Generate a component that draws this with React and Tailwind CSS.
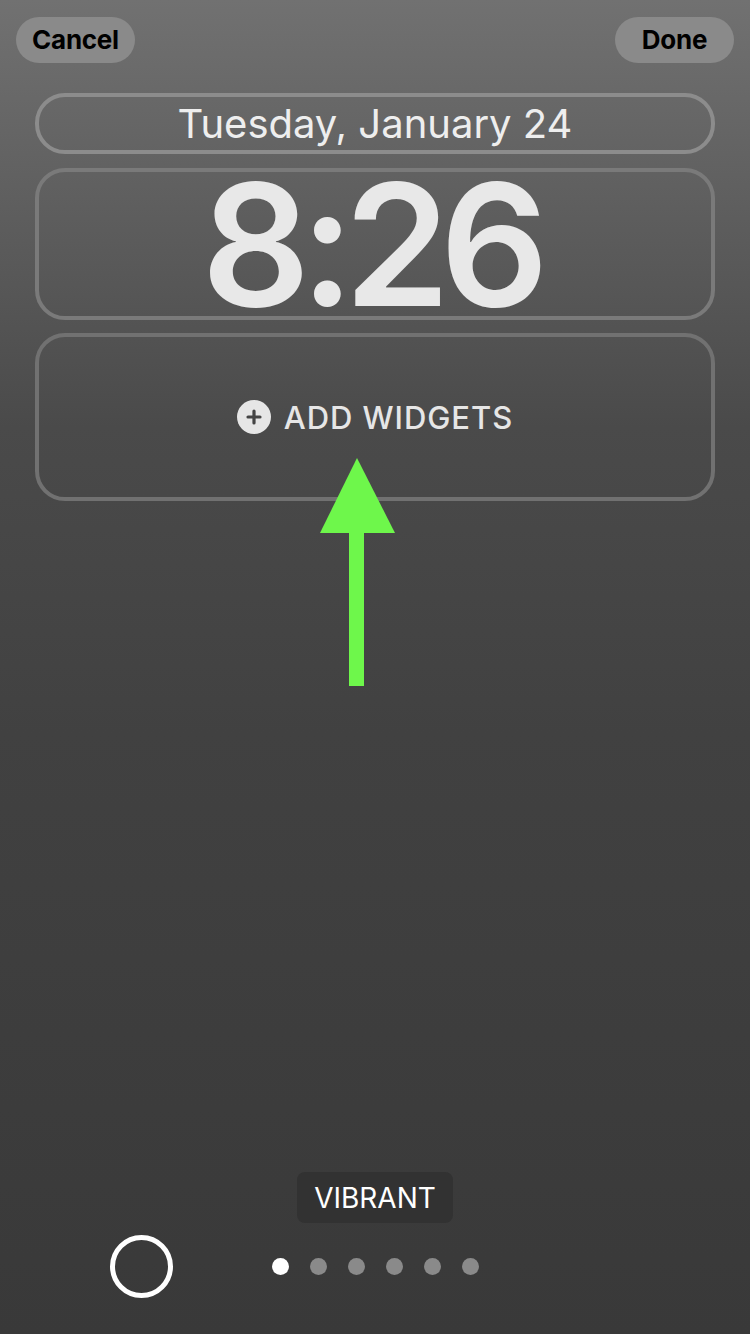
const DOTS = [true, false, false, false, false, false]

function Pill({ children }) {
  return (
    <button className="flex h-[46px] w-[119px] items-center justify-center rounded-full bg-[#8a8a8a] text-[26px] font-bold leading-none tracking-[-0.01em] text-black">
      {children}
    </button>
  )
}

export default function App() {
  return (
    <div
      className="relative flex h-[1334px] w-[750px] flex-col overflow-hidden bg-[linear-gradient(180deg,#717171_0%,#4a4a4a_32%,#414141_55%,#393939_100%)]"
      style={{ fontFamily: 'Inter, "Liberation Sans", sans-serif' }}
    >
      {/* Top bar */}
      <div className="flex items-center justify-between px-4 pt-[17px]">
        <Pill>Cancel</Pill>
        <Pill>Done</Pill>
      </div>

      {/* Date */}
      <div className="mx-[35px] mt-[30px] flex h-[61px] items-center justify-center rounded-[30px] border-4 border-[#8c8c8c]">
        <div className="text-[40px] leading-[44px] text-[#eeeeee]">Tuesday, January 24</div>
      </div>

      {/* Time */}
      <div className="mx-[35px] mt-[14px] flex h-[152px] items-center justify-center rounded-[30px] border-4 border-[#7a7a7a]">
        <div className="h-[140px] overflow-visible pr-[10px] text-[170px] font-semibold leading-[140px] tracking-[-0.06em] text-[#e8e8e8]">
          8:26
        </div>
      </div>

      {/* Widgets */}
      <div className="mx-[35px] mt-[13px] flex h-[168px] items-center justify-center gap-[13px] rounded-[30px] border-4 border-[#717171]">
        <span className="flex h-[34px] w-[34px] items-center justify-center rounded-full bg-[#e6e6e6]">
          <svg width="18" height="18" viewBox="0 0 18 18">
            <path d="M9 3v12M3 9h12" stroke="#444" strokeWidth="3.2" strokeLinecap="round" />
          </svg>
        </span>
        <span className="text-[31px] font-medium leading-none tracking-[0.03em] text-[#e6e6e6]">ADD WIDGETS</span>
      </div>

      {/* Annotation arrow */}
      <svg className="absolute left-0 top-0" width="750" height="700" viewBox="0 0 750 700">
        <polygon points="357,458 395,533 320,533" fill="#6ef74b" />
        <rect x="349" y="531" width="15" height="155" fill="#6ef74b" />
      </svg>

      <div className="flex-1" />

      {/* Bottom controls */}
      <div className="flex justify-center">
        <span className="rounded-[8px] bg-[#323232] px-[17px] pb-[10px] pt-[12px] text-[28px] leading-[29px] text-white">
          VIBRANT
        </span>
      </div>
      <div className="relative mb-[36px] mt-[12px] flex h-[63px] items-center justify-center gap-[21px]">
        <span className="absolute left-[110px] h-[63px] w-[63px] rounded-full border-[5px] border-white" />
        {DOTS.map((on, i) => (
          <span
            key={i}
            className={on ? 'h-[17px] w-[17px] rounded-full bg-white' : 'h-[17px] w-[17px] rounded-full bg-[#8a8a8a]'}
          />
        ))}
      </div>
    </div>
  )
}
